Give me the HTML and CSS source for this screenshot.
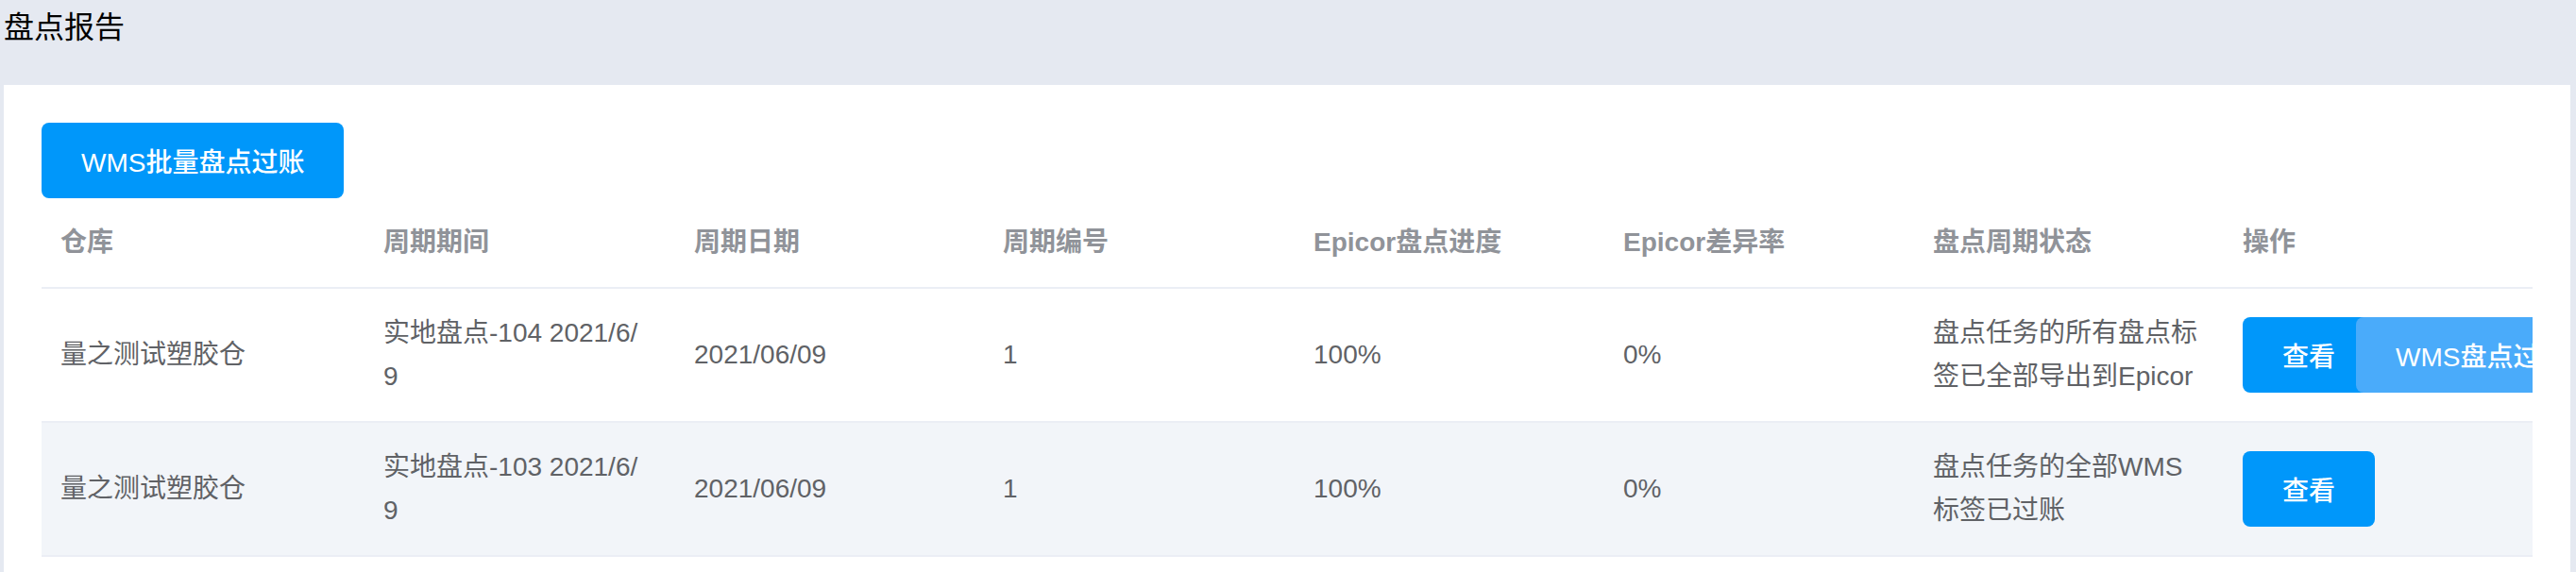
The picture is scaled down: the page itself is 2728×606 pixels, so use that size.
FILE: index.html
```html
<!DOCTYPE html>
<html lang="zh-CN">
<head>
<meta charset="utf-8">
<title>盘点报告</title>
<link rel="stylesheet" href="styles.css">
</head>
<body>
<div class="page">
  <header class="page-head">
    <h1 class="page-title">盘点报告</h1>
  </header>
  <main class="card">
    <div class="toolbar">
      <button class="btn btn-primary btn-batch">WMS批量盘点过账</button>
    </div>
    <table class="grid">
      <colgroup>
        <col class="c1"><col class="c2"><col class="c3"><col class="c4">
        <col class="c5"><col class="c6"><col class="c7"><col class="c8">
      </colgroup>
      <thead>
        <tr>
          <th><div class="cell">仓库</div></th>
          <th><div class="cell">周期期间</div></th>
          <th><div class="cell">周期日期</div></th>
          <th><div class="cell">周期编号</div></th>
          <th><div class="cell">Epicor盘点进度</div></th>
          <th><div class="cell">Epicor差异率</div></th>
          <th><div class="cell">盘点周期状态</div></th>
          <th><div class="cell">操作</div></th>
        </tr>
      </thead>
      <tbody>
        <tr>
          <td><div class="cell">量之测试塑胶仓</div></td>
          <td><div class="cell">实地盘点-104 2021/6/9</div></td>
          <td><div class="cell">2021/06/09</div></td>
          <td><div class="cell">1</div></td>
          <td><div class="cell">100%</div></td>
          <td><div class="cell">0%</div></td>
          <td><div class="cell">盘点任务的所有盘点标签已全部导出到Epicor</div></td>
          <td><div class="cell cell-actions"><button class="btn btn-primary btn-small">查看</button><button class="btn btn-light btn-small btn-overlap">WMS盘点过账</button></div></td>
        </tr>
        <tr class="striped">
          <td><div class="cell">量之测试塑胶仓</div></td>
          <td><div class="cell">实地盘点-103 2021/6/9</div></td>
          <td><div class="cell">2021/06/09</div></td>
          <td><div class="cell">1</div></td>
          <td><div class="cell">100%</div></td>
          <td><div class="cell">0%</div></td>
          <td><div class="cell">盘点任务的全部WMS标签已过账</div></td>
          <td><div class="cell cell-actions"><button class="btn btn-primary btn-small">查看</button></div></td>
        </tr>
      </tbody>
    </table>
  </main>
</div>
</body>
</html>
```
FILE: styles.css
```css
* { box-sizing: border-box; }
html, body {
  margin: 0;
  padding: 0;
  background: #e5e9f1;
  font-family: "Liberation Sans", "Noto Sans CJK SC", sans-serif;
}
.page {
  display: flex;
  flex-direction: column;
  min-height: 606px;
}
.page-head {
  height: 90px;
  padding: 6px 4px 0;
}
.page-title {
  margin: 0;
  font-size: 32px;
  font-weight: 400;
  line-height: 46px;
  color: #000;
}
.card {
  flex: 1;
  background: #fff;
  margin: 0 6px 0 4px;
  padding: 40px;
}
.toolbar {
  display: flex;
}
.btn {
  display: inline-flex;
  align-items: center;
  justify-content: center;
  height: 80px;
  padding: 0 42px;
  border: 0;
  border-radius: 8px;
  font-family: inherit;
  font-size: 28px;
  font-weight: 500;
  color: #fff;
  white-space: nowrap;
  vertical-align: middle;
}
.btn-primary { background: #0097fa; }
.btn-light { background: #4aabfa; }
.btn-overlap { margin-left: -20px; }

.grid {
  width: 2638px;
  table-layout: fixed;
  border-collapse: collapse;
  font-size: 28px;
  color: #606266;
}
.c1 { width: 342px; }
.c2 { width: 329px; }
.c3 { width: 327px; }
.c4 { width: 329px; }
.c5 { width: 328px; }
.c6 { width: 328px; }
.c7 { width: 328px; }
.c8 { width: 327px; }

.grid th, .grid td {
  padding: 24px 0;
  text-align: left;
  vertical-align: middle;
  border-bottom: 2px solid #ebeef5;
}
.grid th {
  color: #909399;
  font-weight: 700;
}
.cell {
  padding: 0 26px 0 20px;
  line-height: 46px;
  word-break: break-all;
  overflow: hidden;
}
.cell-actions {
  white-space: nowrap;
  padding-right: 0;
  display: flex;
}
.striped td { background: #f2f5f9; }
```
